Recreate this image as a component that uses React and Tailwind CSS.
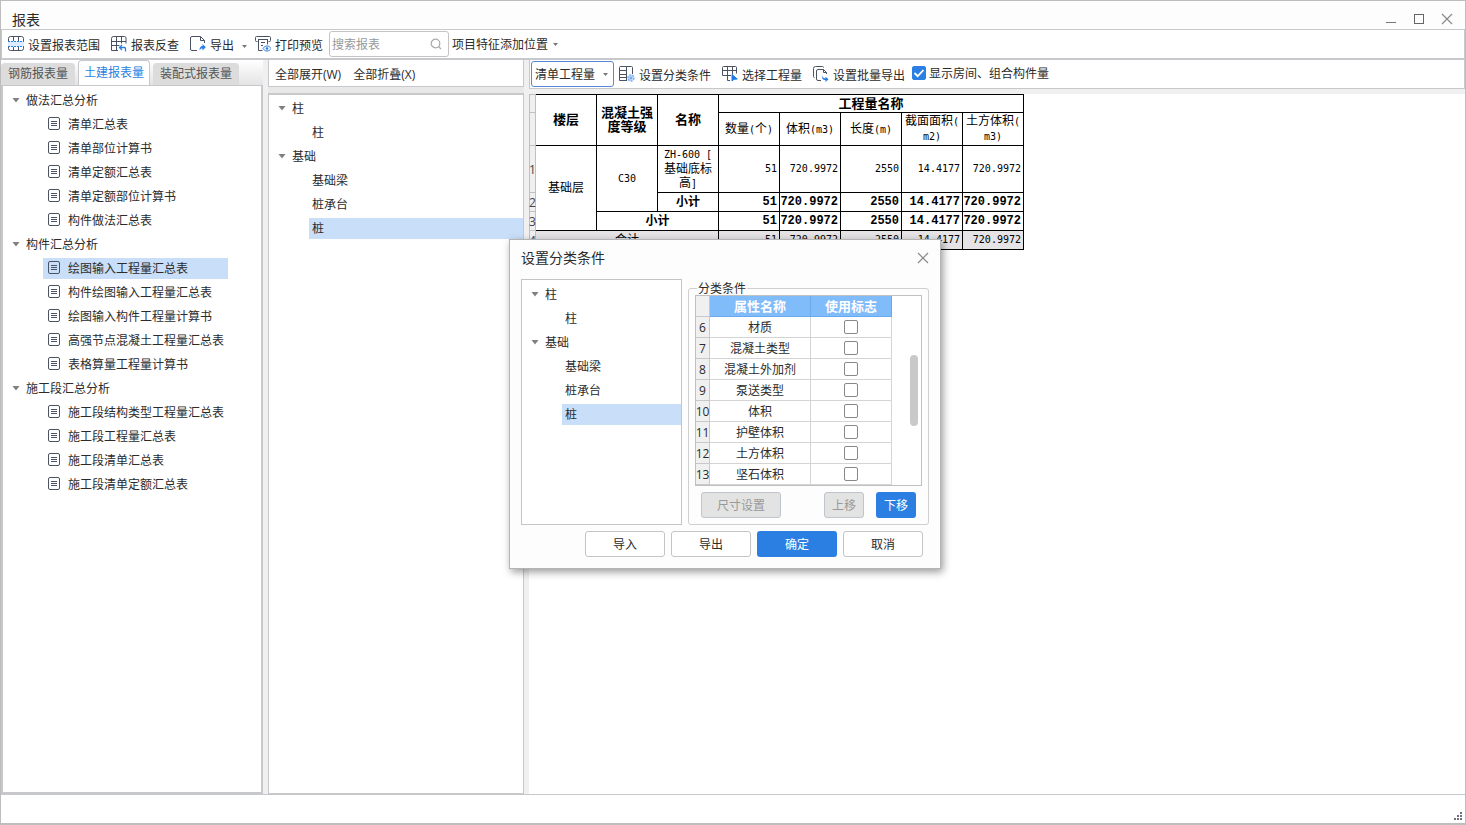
import { useState } from 'react';

const reportTree = [
    {
        name: '做法汇总分析',
        items: ['清单汇总表', '清单部位计算书', '清单定额汇总表', '清单定额部位计算书', '构件做法汇总表'],
    },
    {
        name: '构件汇总分析',
        items: [
            '绘图输入工程量汇总表',
            '构件绘图输入工程量汇总表',
            '绘图输入构件工程量计算书',
            '高强节点混凝土工程量汇总表',
            '表格算量工程量计算书',
        ],
    },
    {
        name: '施工段汇总分析',
        items: ['施工段结构类型工程量汇总表', '施工段工程量汇总表', '施工段清单汇总表', '施工段清单定额汇总表'],
    },
];

const componentTree = [
    { name: '柱', items: ['柱'] },
    { name: '基础', items: ['基础梁', '桩承台', '桩'] },
];

const properties = [
    { id: 6, name: '材质' },
    { id: 7, name: '混凝土类型' },
    { id: 8, name: '混凝土外加剂' },
    { id: 9, name: '泵送类型' },
    { id: 10, name: '体积' },
    { id: 11, name: '护壁体积' },
    { id: 12, name: '土方体积' },
    { id: 13, name: '坚石体积' },
];

const values = ['51', '720.9972', '2550', '14.4177', '720.9972'];

/* ---------- icons ---------- */

function Icon({ children, size = 16 }) {
    return (
        <svg width={size} height={size} viewBox="0 0 16 16" fill="none" stroke="#4b5263" className="shrink-0" aria-hidden="true">
            {children}
        </svg>
    );
}

function RangeIcon() {
    return (
        <Icon>
            <path d="M0.5 5.5V2.5a2 2 0 0 1 2-2h11a2 2 0 0 1 2 2v3M0.5 10.5v2a2 2 0 0 0 2 2h11a2 2 0 0 0 2-2v-2M5.5 0.5v5M10.5 0.5v5M5.5 10.5v4M10.5 10.5v4" />
            <path d="M0 5h16v6H0z" fill="#dcebfd" stroke="none" />
            <path d="M0 5.5h16M0 10.5h16" stroke="#2b7fe3" strokeDasharray="2 1" />
        </Icon>
    );
}

function TraceIcon() {
    return (
        <Icon>
            <path d="M7 14.5H0.5v-12a2 2 0 0 1 2-2h11a1.5 1.5 0 0 1 1.5 1.5v5.5M0.5 5.5h14.5M0.5 9.5h8M5.5 0.5v14M10.5 0.5v7" />
            <path d="M8.5 11.5h5a1 1 0 0 1 1 1v3M11 9l-2.500 2.500L11 14" stroke="#2b7fe3" strokeWidth="1.300" />
        </Icon>
    );
}

function ExportIcon() {
    return (
        <Icon>
            <path d="M7 14.5H2a1.5 1.5 0 0 1-1.500-1.500V2A1.500 1.500 0 0 1 2 0.5h8.500l4 4V7M10.500 0.500v4h4" />
            <path d="M9.500 14.500c0-3 1-4.500 3-4.500V8l3.300 3.200-3.300 3.200v-2c-1.500 0-2.200.6-3 2.100z" fill="#2b7fe3" stroke="none" />
        </Icon>
    );
}

function PrintIcon() {
    return (
        <Icon>
            <path d="M2.500 5.500h-1a1 1 0 0 1-1-1v-3a1 1 0 0 1 1-1h13a1 1 0 0 1 1 1v3a1 1 0 0 1-1 1h-1M3 3.500h10M3.500 3.500v11h4M12.500 3.500v5M6 6.500h4M6 9.500h2" />
            <path d="M8 12.500c1-1.700 2.300-2.500 4-2.500s3 .8 4 2.500c-1 1.700-2.300 2.500-4 2.500s-3-.8-4-2.500z" fill="#fff" stroke="#2b7fe3" />
            <circle cx="12" cy="12.500" r="1.300" fill="#2b7fe3" stroke="none" />
        </Icon>
    );
}

function ClassifyIcon() {
    return (
        <Icon>
            <path d="M8 14.500H0.500v-13a1 1 0 0 1 1-1h6v14M0.500 4.500h7M0.500 8.500h7M0.500 11.500h7M7.500 0.500h5a1 1 0 0 1 1 1V8" />
            <circle cx="12" cy="12" r="3" fill="#cfe2fb" stroke="#7fb0ee" strokeDasharray="2 1" strokeWidth="1.500" />
            <circle cx="12" cy="12" r="1" stroke="#5a9ae8" />
        </Icon>
    );
}

function PickIcon() {
    return (
        <Icon>
            <path d="M8 14.500H5.500V0.500M0.500 9.500v-8a1 1 0 0 1 1-1h12a1 1 0 0 1 1 1v6M0.500 4.500h14M0.500 9.500H9M10.500 0.500v8" />
            <path d="M10 8.500v6.500l2-1.700 3.300-.3z" fill="#1f7ae8" stroke="#1f7ae8" strokeLinejoin="round" />
        </Icon>
    );
}

function BatchIcon() {
    return (
        <Icon>
            <path d="M1.500 11.500a1 1 0 0 1-1-1v-8a2 2 0 0 1 2-2h7a1 1 0 0 1 1 1" />
            <path d="M8 14.500H5a1.500 1.500 0 0 1-1.500-1.500V5A1.500 1.500 0 0 1 5 3.500h5.500l3 3V8M10.500 3.500v3h3" />
            <path d="M9.500 9.500c0 2.200 1 3 3 3v-1.800l3 2.600-3 2.600V14c-2.800 0-4-1.700-3-4.500z" fill="#1f7ae8" stroke="none" />
        </Icon>
    );
}

function SheetIcon() {
    return (
        <svg width="12" height="14" viewBox="0 0 12 14" fill="none" stroke="#4b5263" className="shrink-0" aria-hidden="true">
            <rect x="0.5" y="0.5" width="11" height="12" rx="1.500" />
            <path d="M3 4.500h6M3 6.500h6M3 8.500h6" />
        </svg>
    );
}

function Caret({ className = '' }) {
    return (
        <svg width="5" height="3" viewBox="0 0 5 3" className={`shrink-0 ${className}`} aria-hidden="true">
            <path d="M0 0h5L2.500 3z" fill="#777" />
        </svg>
    );
}

function TreeArrow() {
    return (
        <svg width="8" height="5" viewBox="0 0 8 5" className="shrink-0" aria-hidden="true">
            <path d="M0.500 0h7L4 4.500z" fill="#808080" />
        </svg>
    );
}

function CloseIcon() {
    return (
        <svg width="12" height="12" viewBox="0 0 12 12" fill="none" stroke="#8a8a8a" strokeWidth="1.200" aria-hidden="true">
            <path d="M1 1l10 10M11 1L1 11" />
        </svg>
    );
}

/* ---------- shared parts ---------- */

function ToolButton({ icon, children, caret }) {
    return (
        <button className="flex items-center gap-1 whitespace-nowrap">
            {icon}
            <span className="pt-1">{children}</span>
            {caret && <Caret className="ml-1 mt-1" />}
        </button>
    );
}

function ComponentTree({ selected, onSelect }) {
    return (
        <ul>
            {componentTree.map((group) => (
                <li key={group.name}>
                    <button className="flex h-6 items-center gap-1 pl-2">
                        <TreeArrow />
                        <span className="pl-0.5 pt-0.5">{group.name}</span>
                    </button>
                    <ul className="pl-[39px]">
                        {group.items.map((item) => (
                            <li key={item} className="flex h-6 items-center">
                                <button
                                    onClick={() => onSelect(item)}
                                    className={`h-[21px] w-full pl-[3px] pt-0.5 text-left ${selected === item ? 'bg-[#c9dff9]' : ''}`}
                                >
                                    {item}
                                </button>
                            </li>
                        ))}
                    </ul>
                </li>
            ))}
        </ul>
    );
}

function TitleBar() {
    return (
        <header className="flex h-7 shrink-0 items-end justify-between bg-[#fdfdfd] pl-[11px] pr-3">
            <h1 className="h-[19px] text-sm leading-5">报表</h1>
            <div className="flex items-center gap-4 pb-1">
                <button aria-label="最小化">
                    <svg width="12" height="12" viewBox="0 0 12 12" stroke="#777"><path d="M1 9.500h10" /></svg>
                </button>
                <button aria-label="最大化">
                    <svg width="12" height="12" viewBox="0 0 12 12" fill="none" stroke="#666"><rect x="1.500" y="1.500" width="9" height="9" /></svg>
                </button>
                <button aria-label="关闭"><CloseIcon /></button>
            </div>
        </header>
    );
}

function MainToolbar() {
    return (
        <div className="flex h-[31px] shrink-0 items-center border border-b-2 border-[#c6c8cc] bg-white pl-[6px]">
            <div className="flex items-center gap-2">
                <div className="flex items-center gap-[11px]">
                    <ToolButton icon={<RangeIcon />}>设置报表范围</ToolButton>
                    <ToolButton icon={<TraceIcon />}>报表反查</ToolButton>
                    <ToolButton icon={<ExportIcon />} caret>导出</ToolButton>
                </div>
                <ToolButton icon={<PrintIcon />}>打印预览</ToolButton>
            </div>
            <label className="ml-[6px] flex h-[26px] w-[120px] items-center rounded-[3px] border border-[#c4c4c4] pl-[2px] pr-[6px]">
                <input type="text" placeholder="搜索报表" aria-label="搜索报表" className="min-w-0 flex-1 pt-0.5 outline-none placeholder:text-[#999]" />
                <svg width="12" height="12" viewBox="0 0 12 12" fill="none" stroke="#aaa" strokeWidth="1.200" aria-hidden="true">
                    <circle cx="5.500" cy="5.500" r="4.300" />
                    <path d="M8.500 8.500l2.500 2.500" />
                </svg>
            </label>
            <button className="ml-[3px] flex items-center gap-[5px] whitespace-nowrap">
                <span className="pt-0.5">项目特征添加位置</span>
                <Caret />
            </button>
        </div>
    );
}

function ReportPanel() {
    const [tab, setTab] = useState('土建报表量');
    const [selected, setSelected] = useState('绘图输入工程量汇总表');
    return (
        <aside className="flex w-[262px] shrink-0 flex-col">
            <div role="tablist" className="flex h-[25px] items-end gap-[3px] bg-gradient-to-b from-white to-[#e4e4e4]">
                {['钢筋报表量', '土建报表量', '装配式报表量'].map((name) => (
                    <button
                        key={name}
                        role="tab"
                        aria-selected={tab === name}
                        onClick={() => setTab(name)}
                        className={
                            tab === name
                                ? 'h-[25px] rounded-t border border-b-0 border-[#c6c8cc] bg-white px-[5px] text-[#2b7fe3]'
                                : 'h-[22px] rounded-t bg-[#dcdcdc] px-[7px] text-[#555]'
                        }
                    >
                        {name}
                    </button>
                ))}
            </div>
            <ul className="flex-1 border-2 border-t border-[#c6c8cc] bg-white pt-[2px]">
                {reportTree.map((group) => (
                    <li key={group.name}>
                        <button className="flex h-6 items-center gap-1 pl-[9px]">
                            <TreeArrow />
                            <span className="pl-0.5 pt-0.5">{group.name}</span>
                        </button>
                        <ul className="pl-10">
                            {group.items.map((item) => (
                                <li key={item} className="flex h-6 items-center">
                                    <button
                                        onClick={() => setSelected(item)}
                                        className={`flex h-[21px] items-center gap-2 pl-[5px] whitespace-nowrap ${selected === item ? 'bg-[#c9dff9] pr-10' : ''}`}
                                    >
                                        <SheetIcon />
                                        <span className="pt-0.5">{item}</span>
                                    </button>
                                </li>
                            ))}
                        </ul>
                    </li>
                ))}
            </ul>
        </aside>
    );
}

function ComponentPanel() {
    const [selected, setSelected] = useState('桩');
    return (
        <section className="flex w-[256px] shrink-0 flex-col">
            <div className="flex h-[27px] items-center gap-3 border border-t-0 border-[#c6c8cc] bg-white px-[6px] pt-1">
                <button>全部展开(W)</button>
                <button>全部折叠(X)</button>
            </div>
            <div className="h-[6px] bg-[#e8e8e8]" />
            <div className="flex-1 border border-t-2 border-[#c8c8c8] bg-white pl-px pt-px">
                <ComponentTree selected={selected} onSelect={setSelected} />
            </div>
        </section>
    );
}

function RowHead({ children, first }) {
    return (
        <th className={`border-x border-b border-[#c0c0c0] bg-[#f0f0f0] p-0 font-normal ${first ? 'border-t' : ''}`}>
            <span className='flex justify-center pt-0.5 text-xs text-[#444] font-["Open_Sans",sans-serif]'>{children}</span>
        </th>
    );
}

function ValueCells({ className = '' }) {
    return values.map((v, i) => (
        <td key={i} className={`border-b border-r border-black p-0 pr-[2px] text-right ${className}`}>{v}</td>
    ));
}

function QuantityTable() {
    const head = 'border-b border-r border-black p-0 text-[13px] leading-[14px] font-bold';
    const sub = 'border-b border-r border-black p-0 text-xs leading-[14px] font-normal';
    const cell = 'border-b border-r border-black p-0 text-center text-xs leading-[14px]';
    const bold = 'text-xs font-bold font-["Liberation_Mono",monospace]';
    return (
        <table className='w-[495px] table-fixed border-separate border-spacing-0 text-[10px] leading-[14px] text-black font-["DejaVu_Sans_Mono","Noto_Sans_CJK_SC",monospace]'>
            <colgroup>
                <col className="w-[7px]" />
                <col span="8" className="w-[61px]" />
            </colgroup>
            <thead>
                <tr className="h-[19px]">
                    <RowHead first />
                    <th rowSpan="2" className={`${head} border-t`}>楼层</th>
                    <th rowSpan="2" className={`${head} border-t`}>混凝土强<br />度等级</th>
                    <th rowSpan="2" className={`${head} border-t`}>名称</th>
                    <th colSpan="5" className={`${head} border-t`}>工程量名称</th>
                </tr>
                <tr className="h-[33px]">
                    <RowHead />
                    <th className={sub}>数量<span className="text-[10px]">(</span>个<span className="text-[10px]">)</span></th>
                    <th className={sub}>体积<span className="text-[10px]">(m3)</span></th>
                    <th className={sub}>长度<span className="text-[10px]">(m)</span></th>
                    <th className={sub}>截面面积<span className="text-[10px]">(<br />m2)</span></th>
                    <th className={sub}>土方体积<span className="text-[10px]">(<br />m3)</span></th>
                </tr>
            </thead>
            <tbody>
                <tr className="h-[47px]">
                    <RowHead>1</RowHead>
                    <td rowSpan="3" className={cell}>基础层</td>
                    <td rowSpan="2" className={cell}><span className="text-[10px]">C30</span></td>
                    <td className={cell}><span className="text-[10px]">ZH-600 [</span><br />基础底标<br />高<span className="text-[10px]">]</span></td>
                    <ValueCells />
                </tr>
                <tr className="h-[19px]">
                    <RowHead>2</RowHead>
                    <td className={`${cell} font-bold`}>小计</td>
                    <ValueCells className={bold} />
                </tr>
                <tr className="h-[19px]">
                    <RowHead>3</RowHead>
                    <td colSpan="2" className={`${cell} font-bold`}>小计</td>
                    <ValueCells className={bold} />
                </tr>
                <tr className="h-[19px] bg-[#e5e3e5]">
                    <RowHead>4</RowHead>
                    <td colSpan="3" className={cell}>合计</td>
                    <ValueCells />
                </tr>
            </tbody>
        </table>
    );
}

function CheckBox({ id, checked, onChange, label }) {
    return (
        <span className="relative inline-flex h-[14px] w-[14px] align-middle">
            <input
                id={id}
                type="checkbox"
                aria-label={label}
                checked={checked}
                onChange={onChange}
                className="h-[14px] w-[14px] appearance-none rounded-[2px] border border-[#888] bg-white checked:border-[#2b7fe3] checked:bg-[#2b7fe3]"
            />
            {checked && (
                <svg viewBox="0 0 14 14" fill="none" stroke="#fff" strokeWidth="1.800" className="pointer-events-none absolute inset-0">
                    <path d="M2.500 7l3.200 3.200L11.500 4" />
                </svg>
            )}
        </span>
    );
}

function QuantityPanel() {
    const [showRooms, setShowRooms] = useState(true);
    return (
        <main className="flex min-w-0 flex-1 flex-col bg-white">
            <div className="flex h-[29px] shrink-0 items-center border border-t-0 border-[#c6c8cc] pl-px">
                <div className="relative flex h-[26px] w-[83px] items-center">
                    <select aria-label="工程量类型" className="h-full w-full appearance-none rounded-[3px] border border-[#5b87d8] bg-white pl-[3px] pr-4 pt-0.5">
                        <option>清单工程量</option>
                    </select>
                    <Caret className="pointer-events-none absolute right-[6px]" />
                </div>
                <div className="flex items-center gap-[11px] pl-[5px]">
                    <ToolButton icon={<ClassifyIcon />}>设置分类条件</ToolButton>
                    <ToolButton icon={<PickIcon />}>选择工程量</ToolButton>
                    <ToolButton icon={<BatchIcon />}>设置批量导出</ToolButton>
                </div>
                <div className="flex items-center gap-[3px] pb-[2px] pl-[7px]">
                    <CheckBox id="show-rooms" checked={showRooms} onChange={(e) => setShowRooms(e.target.checked)} />
                    <label htmlFor="show-rooms" className="whitespace-nowrap pt-0.5">显示房间、组合构件量</label>
                </div>
            </div>
            <div className="h-[5px] shrink-0 bg-[#f0f0f0]" />
            <QuantityTable />
        </main>
    );
}

function ClassifyDialog({ onClose }) {
    const [selected, setSelected] = useState('桩');
    const [used, setUsed] = useState({});
    const plain = 'h-[26px] w-20 rounded-[3px] border border-[#c4c4c4] bg-white pt-0.5';
    const primary = 'h-[26px] rounded-[3px] bg-[#2b7fe3] pt-0.5 text-white';
    const disabled = 'h-[26px] rounded-[3px] border border-[#c0c4cf] bg-[#e3e3e3] pt-0.5 text-[#999]';
    return (
        <div
            role="dialog"
            aria-labelledby="dialog-title"
            className="absolute left-[508px] top-[238px] w-[432px] border border-[#b4b4b4] bg-[#fdfdfd] px-[11px] pb-[11px] shadow-[2px_3px_8px_rgba(0,0,0,0.4)]"
        >
            <div className="flex h-[39px] items-center justify-between pb-[3px]">
                <h2 id="dialog-title" className="text-sm leading-5">设置分类条件</h2>
                <button aria-label="关闭" onClick={onClose}><CloseIcon /></button>
            </div>
            <div className="flex h-[246px] gap-[6px]">
                <div className="w-[161px] border border-[#c4c4c4] bg-white pl-px pt-[2px]">
                    <ComponentTree selected={selected} onSelect={setSelected} />
                </div>
                <fieldset className="min-w-0 flex-1 rounded-[3px] border border-[#cfcfcf] px-[6px]">
                    <legend className="ml-[2px] h-[18px] px-px leading-5">分类条件</legend>
                    <div className="relative -mt-[2px] h-[191px] overflow-hidden border border-[#c0c0c0] bg-white">
                        <table className="w-[196px] table-fixed border-separate border-spacing-0 text-center">
                            <colgroup>
                                <col className="w-[14px]" />
                                <col className="w-[101px]" />
                                <col className="w-[81px]" />
                            </colgroup>
                            <thead>
                                <tr className="h-[21px]">
                                    <th className="border-b border-r border-[#c8c8c8] bg-[#f0f0f0] p-0" />
                                    <th className="border-b border-r border-[#6aa9ec] bg-[#80bbfa] p-0 pt-px text-[13px] leading-[19px] text-white">属性名称</th>
                                    <th className="border-b border-r border-[#6aa9ec] bg-[#80bbfa] p-0 pt-px text-[13px] leading-[19px] text-white">使用标志</th>
                                </tr>
                            </thead>
                            <tbody>
                                {properties.map((p) => (
                                    <tr key={p.id} className="h-[21px]">
                                        <th className="border-b border-r border-[#c8c8c8] bg-[#f0f0f0] p-0 font-normal">
                                            <span className="flex justify-center pt-0.5 leading-[18px]">{p.id}</span>
                                        </th>
                                        <td className="border-b border-r border-[#d4d4d4] p-0 pt-0.5 leading-[18px]">{p.name}</td>
                                        <td className="border-b border-r border-[#d4d4d4] p-0 leading-[18px]">
                                            <div className="flex justify-center">
                                                <CheckBox
                                                    label={p.name}
                                                    checked={!!used[p.id]}
                                                    onChange={(e) => setUsed({ ...used, [p.id]: e.target.checked })}
                                                />
                                            </div>
                                        </td>
                                    </tr>
                                ))}
                            </tbody>
                        </table>
                        {/* Scrollbar thumb */}
                        <div className="absolute right-[3px] top-[59px] h-[71px] w-2 rounded-full bg-[#c9c9c9]" />
                    </div>
                    <div className="flex pl-[6px] pr-[6px] pt-[6px]">
                        <button disabled className={`${disabled} w-20`}>尺寸设置</button>
                        <button disabled className={`${disabled} ml-auto w-10`}>上移</button>
                        <button className={`${primary} ml-3 w-10`}>下移</button>
                    </div>
                </fieldset>
            </div>
            <div className="flex justify-end gap-[6px] pr-[6px] pt-[6px]">
                <button className={plain}>导入</button>
                <button className={plain}>导出</button>
                <button className={`${primary} w-20`} onClick={onClose}>确定</button>
                <button className={plain} onClick={onClose}>取消</button>
            </div>
        </div>
    );
}

export default function App() {
    const [dialogOpen, setDialogOpen] = useState(true);

    return (
        <div className='relative flex h-screen flex-col overflow-hidden border border-b-2 border-[#bdbdbd] bg-[#f0f0f0] text-xs text-[#2b2b2b] font-["Open_Sans","Noto_Sans_CJK_SC",sans-serif]'>
            <TitleBar />
            <MainToolbar />
            <div className="flex min-h-0 flex-1 gap-[5px]">
                <ReportPanel />
                <ComponentPanel />
                <QuantityPanel />
            </div>
            <footer className="flex h-[29px] shrink-0 items-end justify-end border-t border-[#c6c8cc] bg-white p-[3px]">
                <svg width="8" height="8" viewBox="0 0 8 8" fill="#6b7080" aria-hidden="true">
                    <path d="M6 0h2v2H6zM3 3h2v2H3zM6 3h2v2H6zM0 6h2v2H0zM3 6h2v2H3zM6 6h2v2H6z" />
                </svg>
            </footer>
            {dialogOpen && <ClassifyDialog onClose={() => setDialogOpen(false)} />}
        </div>
    );
}
